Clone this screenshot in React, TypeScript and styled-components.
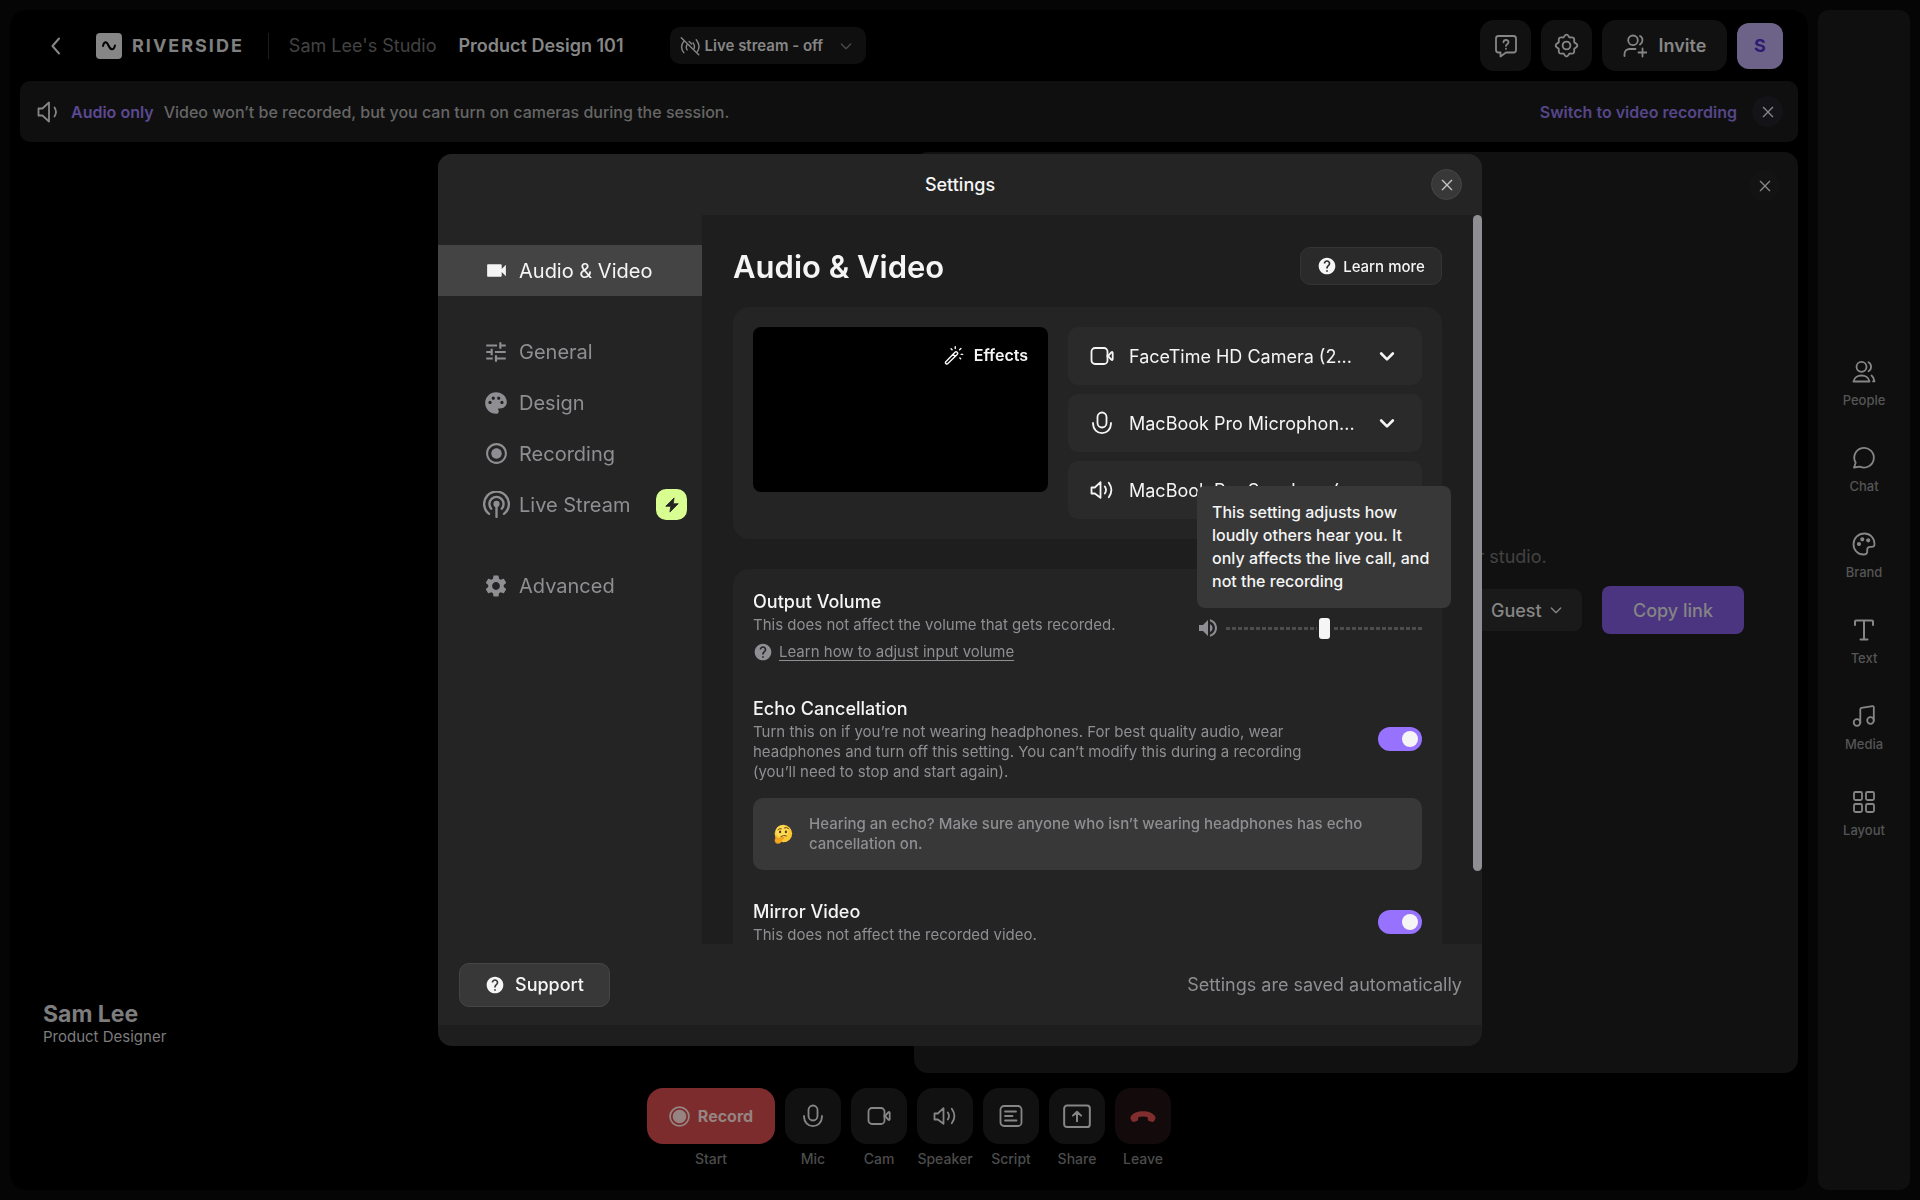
import React, { ReactNode } from "react";
import styled, { createGlobalStyle, css } from "styled-components";
import {
  MdVideocam,
  MdTune,
  MdPalette,
  MdRadioButtonChecked,
  MdSettings,
  MdHelp,
  MdVolumeUp,
} from "react-icons/md";

const GlobalStyle = createGlobalStyle`
  *, *::before, *::after { box-sizing: border-box; }
  body {
    margin: 0;
    background: #050505;
    color: #f5f5f5;
    font-family: Inter, "Liberation Sans", sans-serif;
    font-size: 16px;
  }
  h1, h2, h3, p { margin: 0; font-weight: 400; }
  button, input, select { font: inherit; color: inherit; }
  button { border: 0; padding: 0; background: none; cursor: pointer; }
  svg { display: block; flex: none; }
`;

/* ---------- icons ---------- */

type IconProps = { size?: number; width?: number; children: ReactNode };

const Line = ({ size = 24, width = 2, children }: IconProps) => (
  <svg
    width={size}
    height={size}
    viewBox="0 0 24 24"
    fill="none"
    stroke="currentColor"
    strokeWidth={width}
    strokeLinecap="round"
    strokeLinejoin="round"
    aria-hidden="true"
  >
    {children}
  </svg>
);

const CloseIcon = ({ size = 18 }: { size?: number }) => (
  <Line size={size} width={2}><path d="M5 5l14 14M19 5L5 19" /></Line>
);
const BackIcon = () => <Line><path d="M15 4.500L8.500 12 15 19.500" /></Line>;
const ChevronIcon = ({ size = 18, width = 1.8 }: { size?: number; width?: number }) => (
  <Line size={size} width={width}><path d="M5 9l7 7 7-7" /></Line>
);
const MicIcon = () => (
  <Line width={1.8}>
    <rect x="7.500" y="1.500" width="9" height="15" rx="4.500" />
    <path d="M3 12c0 13.500 18 13.500 18 0" />
  </Line>
);
const CamIcon = () => (
  <Line width={1.8}>
    <rect x="1.500" y="4" width="16" height="16" rx="3.500" />
    <path d="M17.500 12.700L21.300 8.300Q22.700 7.500 22.700 9v6q0 1.500-1.400.7L17.500 11.300z" />
  </Line>
);
const SpeakerIcon = () => (
  <Line width={1.8}>
    <path d="M1.500 9.500h3.300L10.500 4.200V19.800L4.800 15.500H1.500z" />
    <path d="M14.800 8.500q2.400 3.500 0 7M18.800 4.700q5.200 7.300 0 14.600" />
  </Line>
);
const BannerSpeakerIcon = () => (
  <Line width={1.8}>
    <path d="M2.500 8.500h3.900L13 2.500V21.500L6.400 15.500H2.500z" />
    <path d="M18.500 7.500q3 4.500 0 9" />
  </Line>
);
const ScriptIcon = () => (
  <Line width={1.8}>
    <rect x="1.500" y="2" width="21" height="20" rx="3.500" />
    <path d="M6 7.500h11M6 12h7.500M6 16.500h11.500" />
  </Line>
);
const ShareIcon = () => (
  <Line size={28} width={1.7}>
    <rect x="1" y="3" width="22" height="18.500" rx="2.500" />
    <path d="M12 16.500V8.500M8.500 11.700L12 8.300l3.500 3.400" />
  </Line>
);
const LeaveIcon = () => (
  <svg width="26" height="26" viewBox="0 0 24 24" fill="currentColor" aria-hidden="true">
    <path d="M12 7.500C7.200 7.500 2.600 9 .8 12.300c-.7 1.500-.2 3.300 1 4.600.6.700 1.600.6 2.500.4l2-.6c.9-.3 1.300-1 1.300-2v-1.600c2.800-.9 6-.9 8.800 0v1.600c0 1 .4 1.700 1.300 2l2 .6c.9.2 1.900.3 2.500-.4 1.200-1.300 1.700-3.100 1-4.600C21.400 9 16.800 7.500 12 7.500z" />
  </svg>
);
const RecordIcon = () => (
  <Line size={21} width={2}>
    <circle cx="12" cy="12" r="10.800" />
    <circle cx="12" cy="12" r="6.800" fill="currentColor" />
  </Line>
);
const LiveOffIcon = () => (
  <Line size={20} width={1.7}>
    <path d="M1.500 2L22.500 22.500" />
    <path d="M4.500 6.500C1 11 1 15.500 4.500 20M8.500 10.500c-1.300 1.900-1.300 4 0 6.200" />
    <path d="M19.500 4.500c4 5 4 10.500 1.200 14.500M15.700 8.200c1.700 2.100 2 4.500 1.200 6.800M11 6.500l3 3" />
  </Line>
);
const HelpBubbleIcon = () => (
  <Line width={1.8}>
    <path d="M4.500 2h15A2.500 2.500 0 0 1 22 4.500v11.500a2.500 2.500 0 0 1-2.500 2.500H12l-5.500 4v-4h-2A2.500 2.500 0 0 1 2 16V4.500A2.500 2.500 0 0 1 4.500 2z" />
    <path d="M9.500 8.300c.2-3.200 5.200-3 5 .1-.1 1.800-2.500 1.800-2.500 3.500M12 14.600v.2" />
  </Line>
);
const GearIcon = () => (
  <Line size={25} width={1.8}>
    <path d="M12 1.500c1.700 0 1.800 1.800 2.700 2.600.9.700 2.700-.7 4.100.6 1.400 1.400.1 3.100.7 4.200.5 1 2.900 1 2.900 3.100s-2.400 2.100-2.900 3.100c-.6 1.100.7 2.800-.7 4.200-1.400 1.300-3.200-.1-4.100.6-.9.800-1 2.600-2.700 2.600s-1.800-1.800-2.700-2.600c-.9-.7-2.700.7-4.100-.6-1.400-1.400-.1-3.100-.7-4.200-.5-1-2.900-1-2.900-3.100s2.400-2.100 2.900-3.100c.6-1.100-.7-2.800.7-4.200 1.400-1.300 3.200.1 4.100-.6.900-.8 1-2.600 2.700-2.600z" />
    <circle cx="12" cy="12" r="3.700" />
  </Line>
);
const InviteIcon = () => (
  <Line width={1.8}>
    <circle cx="10" cy="6.300" r="4.800" />
    <path d="M1.500 22v-2a5 5 0 0 1 5-5h6M17 2c3.300 1.500 3.300 6.500 0 8.500M19.500 14.500v8M15.500 18.500h8" />
  </Line>
);
const PeopleIcon = () => (
  <Line width={1.8}>
    <circle cx="9.500" cy="6.800" r="5" />
    <path d="M1.500 21.500c1.400-8 14.600-8 16 0zM16.500 2.200c3.400 1.800 3.400 7.200 0 9M19.500 15.500c1.700 1.300 2.700 3 3 5.800h-1.500" />
  </Line>
);
const ChatIcon = () => (
  <Line width={1.8}><path d="M2 21.500l1.700-4.700A9.800 9.800 0 1 1 8 20.600z" /></Line>
);
const BrandIcon = () => (
  <Line width={1.8}>
    <path d="M12.500 1.500C6 1.500 1.500 6.300 1.500 12.200S6 22.500 11.500 22.500c2.800 0 3.700-1 3.700-3v-1.700c0-2 1-3 3-3h1.500c2 0 2.900-1 2.800-3C22.300 5.500 18 1.500 12.500 1.500z" />
    <circle cx="7" cy="12" r="1.200" fill="currentColor" />
    <circle cx="10.300" cy="7.300" r="1.200" fill="currentColor" />
    <circle cx="16.200" cy="8.300" r="1.200" fill="currentColor" />
  </Line>
);
const TextIcon = () => (
  <Line width={2}><path d="M3 7V3.500Q3 2.500 4 2.500H20Q21 2.500 21 3.500V7M12 2.500v19M8.500 21.500h7" /></Line>
);
const MediaIcon = () => (
  <Line width={1.8}>
    <circle cx="5" cy="18.500" r="3.300" />
    <circle cx="18.500" cy="16.500" r="3.300" />
    <path d="M8.300 18.500V5.200Q8.300 4 9.500 3.800L20.500 2.200Q21.800 2 21.800 3.300V16.500" />
  </Line>
);
const LayoutIcon = () => (
  <Line width={1.8}>
    <rect x="2" y="2" width="8" height="8" rx="1.500" />
    <rect x="14" y="2" width="8" height="8" rx="1.500" />
    <rect x="2" y="14" width="8" height="8" rx="1.500" />
    <rect x="14" y="14" width="8" height="8" rx="1.500" />
  </Line>
);
const WandIcon = () => (
  <Line size={20} width={1.7}>
    <path d="M2.200 20l11-11.300a1.800 1.800 0 0 1 2.600 2.600L4.700 22.300a1.700 1.700 0 0 1-2.500-2.300zM10.800 11.200l2.600 2.600" />
    <path d="M13.500 2v2.200M18.700 5.700l1.600-1.600M20.500 11.200h2M8.500 4.500l1.200 1.200M19 15.500l1 1" />
  </Line>
);
const PodcastIcon = () => (
  <Line size={27} width={2.1}>
    <path d="M5.400 20.300a11 11 0 1 1 13.200 0M7.300 15.700a6.300 6.300 0 1 1 9.400 0M12 13v10" />
    <circle cx="12" cy="11.500" r="1.700" fill="currentColor" />
  </Line>
);
const BoltIcon = () => (
  <svg width="20" height="20" viewBox="0 0 24 24" fill="currentColor" stroke="currentColor" strokeLinejoin="round" aria-hidden="true">
    <path d="M14.500 3.500L4.500 13.500H10.500L9.500 20.500L19.500 10.500H13.500z" />
  </svg>
);
const ThinkingFace = () => (
  <svg width="20" height="20" viewBox="0 0 24 24" role="img" aria-label="Thinking face">
    <circle cx="12.500" cy="11.500" r="10.500" fill="#fcc936" />
    <circle cx="11" cy="9" r="7.500" fill="#fddb52" />
    <ellipse cx="8.500" cy="9.500" rx="1.300" ry="1.700" fill="#5b3712" />
    <ellipse cx="15.500" cy="9.500" rx="1.300" ry="1.700" fill="#5b3712" />
    <path d="M6 6.700q2-1.800 4-1M13.500 4.700q2.500-1.300 5 .6M9.500 15q3-2 6.500-.8" fill="none" stroke="#6b4115" strokeWidth="1.200" strokeLinecap="round" />
    <path d="M3 15.500q1.200-.8 1.800 1l.6 1.600 6.300-2.300q1.800-.3 1.500 1.200l-3.400 2q1 3.500-3 4.500-4 .3-4.600-3.500z" fill="#f5a524" stroke="#d98712" strokeWidth=".6" />
  </svg>
);

/* ---------- studio ---------- */

const Shell = styled.div`
  display: grid;
  grid-template-columns: minmax(0, 1fr) 92px;
  gap: 10px;
  height: 100vh;
  padding: 10px;
`;

const Studio = styled.main`
  display: flex;
  flex-direction: column;
  padding: 0 10px;
  border-radius: 16px;
  background: #000;
`;

const Header = styled.header`
  display: flex;
  align-items: center;
  height: 71px;
  padding: 0 15px 0 24px;
  color: #868686;
  font-size: 18px;
`;

const BackButton = styled.button`
  display: flex;
  margin-right: 28px;
`;

const Logo = styled.div`
  display: flex;
  align-items: center;
  gap: 10px;
  padding-right: 24px;
  border-right: 1px solid #1c1c1c;
  margin-right: 20px;
  color: #808080;
  font-weight: 700;
  letter-spacing: 2px;
`;

const StudioName = styled.span`
  margin-right: 22px;
  color: #434343;
`;

const SessionName = styled.h1`
  font-size: 18px;
  font-weight: 600;
`;

const TitleGroup = styled.div`
  display: flex;
  align-items: center;
  margin-right: auto;
`;

const LiveButton = styled.button`
  display: flex;
  align-items: center;
  gap: 5px;
  height: 37px;
  padding: 0 12px 0 10px;
  margin-left: 46px;
  border-radius: 10px;
  background: #0f0f0f;
  font-size: 15px;
  font-weight: 600;
  svg:last-child { margin-left: 10px; color: #4a4a4a; }
`;

const HeaderActions = styled.div`
  display: flex;
  align-items: center;
  gap: 10px;
`;

const HeaderButton = styled.button<{ $wide?: boolean }>`
  display: flex;
  align-items: center;
  justify-content: center;
  gap: 12px;
  height: 51px;
  width: ${(p) => (p.$wide ? "125px" : "51px")};
  border-radius: 14px;
  background: #111;
  font-weight: 600;
`;

const Avatar = styled.button`
  width: 46px;
  height: 46px;
  border-radius: 12px;
  background: #6d6388;
  color: #2e1a72;
  font-weight: 700;
`;

const Banner = styled.section`
  display: flex;
  align-items: center;
  height: 61px;
  padding: 0 15px 0 16px;
  border-radius: 10px;
  background: #0f0f0f;
  color: #666;
  font-size: 16px;
  font-weight: 500;
  svg { color: #868686; }
`;

const BannerTitle = styled.strong`
  margin: 0 10px 0 11px;
  color: #5b4991;
  font-weight: 600;
`;

const BannerLink = styled.a`
  margin-left: auto;
  margin-right: 15px;
  color: #56468a;
  font-weight: 600;
  text-decoration: none;
`;

const RoundButton = styled.button<{ $bg?: string }>`
  display: flex;
  align-items: center;
  justify-content: center;
  width: 31px;
  height: 31px;
  border-radius: 50%;
  background: ${(p) => p.$bg ?? "transparent"};
  color: #868686;
`;

const Stage = styled.div`
  display: grid;
  grid-template-columns: 1fr 1fr;
  gap: 10px;
  flex: 1;
  min-height: 0;
  margin-top: 10px;
`;

const VideoTile = styled.section`
  display: flex;
  flex-direction: column;
  justify-content: flex-end;
  padding: 0 23px 26px;
  border-radius: 14px;
  background: #000;
  color: #7d7d7d;
`;

const TileName = styled.h2`
  font-size: 23px;
  font-weight: 700;
  line-height: 26px;
`;

const TileRole = styled.p`
  font-size: 15px;
  line-height: 20px;
`;

const InviteTile = styled.section`
  display: flex;
  flex-direction: column;
  padding: 18px;
  border-radius: 14px;
  background: #111;
`;

const TileTop = styled.div`
  display: flex;
  justify-content: flex-end;
`;

const InviteBody = styled.div`
  display: flex;
  flex-direction: column;
  justify-content: center;
  gap: 18px;
  flex: 1;
  padding: 0 36px 76px;
`;

const InviteText = styled.p`
  text-align: center;
  color: #434343;
  font-size: 18px;
  line-height: 22px;
`;

const InviteRow = styled.div`
  display: flex;
  align-items: center;
  gap: 20px;
`;

const LinkBox = styled.div`
  display: flex;
  align-items: center;
  flex: 1;
  height: 42px;
  padding: 0 18px;
  border-radius: 8px;
  background: #1a1a1a;
  color: #868686;
  font-size: 18px;
`;

const LinkInput = styled.input`
  flex: 1;
  min-width: 0;
  border: 0;
  background: none;
`;

const BareSelect = styled.select`
  appearance: none;
  border: 0;
  padding: 0;
  background: none;
  outline: 0;
`;

const RoleSelect = styled(BareSelect)`
  width: 57px;
  font-weight: 500;
`;

const CopyButton = styled.button`
  width: 142px;
  height: 48px;
  border-radius: 8px;
  background: #4b3580;
  color: #858585;
  font-size: 18px;
  font-weight: 500;
`;

const Controls = styled.nav`
  display: flex;
  justify-content: center;
  gap: 10px;
  height: 117px;
  padding-top: 15px;
`;

const Control = styled.div`
  display: flex;
  flex-direction: column;
  align-items: center;
  gap: 5px;
  min-width: 56px;
  width: min-content;
  color: #868686;
`;

const ControlButton = styled.button<{ $kind?: "record" | "leave" }>`
  display: flex;
  align-items: center;
  justify-content: center;
  gap: 8px;
  width: 56px;
  height: 56px;
  border-radius: 16px;
  background: #111;
  ${(p) =>
    p.$kind === "record" &&
    css`
      width: 128px;
      background: #7c2c2c;
      color: #958482;
      font-size: 16px;
      font-weight: 700;
    `}
  ${(p) =>
    p.$kind === "leave" &&
    css`
      background: #130b0b;
      color: #7f2d2d;
    `}
`;

const ControlLabel = styled.span`
  color: #4c4c4c;
  font-size: 14px;
  font-weight: 500;
  line-height: 20px;
`;

const SideRail = styled.aside`
  display: flex;
  flex-direction: column;
  align-items: center;
  justify-content: center;
  gap: 38px;
  padding-bottom: 2px;
  border-radius: 10px;
  background: #0f0f0f;
`;

const RailButton = styled.button`
  display: flex;
  flex-direction: column;
  align-items: center;
  gap: 8px;
  color: #868686;
`;

const RailLabel = styled.span`
  color: #555;
  font-size: 13px;
  font-weight: 500;
  line-height: 16px;
`;

/* ---------- settings dialog ---------- */

const Overlay = styled.div`
  position: fixed;
  inset: 0;
  display: flex;
  justify-content: center;
  padding: 154px 24px;
`;

const Dialog = styled.div`
  display: flex;
  flex-direction: column;
  width: 100%;
  max-width: 1044px;
  overflow: hidden;
  padding-bottom: 21px;
  border-radius: 14px;
  background: #1e1e1e;
`;

const DialogHeader = styled.div`
  display: grid;
  grid-template-columns: 1fr auto 1fr;
  align-items: center;
  height: 61px;
  padding: 0 20px;
  background: #242424;
  > button { grid-column: 3; justify-self: end; border: 1px solid #454545; color: #c4c4c4; }
`;

const DialogTitle = styled.h2`
  grid-column: 2;
  font-size: 18px;
  font-weight: 500;
`;

const DialogBody = styled.div`
  display: flex;
  flex: 1;
  min-height: 0;
`;

const Tabs = styled.nav`
  display: flex;
  flex-direction: column;
  gap: 30px;
  width: 264px;
  padding-top: 30px;
  background: #242424;
`;

const Tab = styled.button<{ $active?: boolean }>`
  display: flex;
  align-items: center;
  width: 100%;
  height: 51px;
  padding: 0 15px 0 44px;
  background: ${(p) => (p.$active ? "#444" : "none")};
  color: ${(p) => (p.$active ? "#f5f5f5" : "#8f8f93")};
  font-size: 20px;
`;

const TabIcon = styled.span`
  display: flex;
  justify-content: center;
  width: 28px;
  margin-right: 9px;
`;

const Badge = styled.span`
  display: flex;
  align-items: center;
  justify-content: center;
  width: 31px;
  height: 31px;
  margin-left: auto;
  border-radius: 10px;
  background: #d8fe91;
  color: #242424;
`;

const Panel = styled.div`
  flex: 1;
  min-width: 0;
  overflow: hidden;
  padding: 31px;
`;

const ScrollRail = styled.div`
  width: 9px;
`;

const ScrollThumb = styled.div`
  height: 90%;
  border-radius: 5px;
  background: #8f8f93;
`;

const PanelHead = styled.div`
  display: flex;
  align-items: center;
  justify-content: space-between;
  height: 40px;
`;

const PanelTitle = styled.h1`
  font-size: 31px;
  font-weight: 600;
`;

const HelpButton = styled.button<{ $large?: boolean }>`
  display: flex;
  align-items: center;
  justify-content: center;
  gap: ${(p) => (p.$large ? "10px" : "6px")};
  width: ${(p) => (p.$large ? "151px" : "142px")};
  height: ${(p) => (p.$large ? "44px" : "38px")};
  border: 1px solid ${(p) => (p.$large ? "#454545" : "#343434")};
  border-radius: 10px;
  background: ${(p) => (p.$large ? "#383838" : "#2a2a2a")};
  font-size: ${(p) => (p.$large ? "18px" : "15px")};
  font-weight: 500;
`;

const DevicesCard = styled.section`
  display: grid;
  grid-template-columns: 295px minmax(0, 1fr);
  align-items: start;
  gap: 20px;
  margin-top: 21px;
  padding: 20px;
  border-radius: 16px;
  background: #242424;
`;

const Preview = styled.div`
  display: flex;
  align-items: flex-start;
  justify-content: flex-end;
  height: 165px;
  padding: 12px 10px;
  border-radius: 8px;
  background: #000;
`;

const EffectsButton = styled.button`
  display: flex;
  align-items: center;
  gap: 10px;
  height: 31px;
  padding: 0 10px;
  border-radius: 8px;
  font-size: 16px;
  font-weight: 600;
`;

const DeviceList = styled.div`
  display: flex;
  flex-direction: column;
  gap: 9px;
`;

const Device = styled.label`
  display: flex;
  align-items: center;
  gap: 15px;
  height: 58px;
  padding: 0 25px 0 22px;
  border-radius: 10px;
  background: #2a2a2a;
  font-size: 18px;
  svg { pointer-events: none; }
`;

const DeviceSelect = styled(BareSelect)`
  flex: 1;
  min-width: 0;
`;

const OptionsCard = styled.section`
  display: flex;
  flex-direction: column;
  gap: 29px;
  margin-top: 30px;
  padding: 20px;
  border-radius: 16px;
  background: #242424;
`;

const Option = styled.div`
  display: flex;
  align-items: center;
  justify-content: space-between;
`;

const OptionText = styled.div`
  max-width: 580px;
`;

const OptionTitle = styled.h3`
  font-size: 18px;
  font-weight: 500;
  line-height: 26px;
`;

const OptionNote = styled.p`
  color: #8f8f93;
  font-size: 15px;
  line-height: 20px;
`;

const HelpLink = styled.a`
  display: flex;
  align-items: center;
  gap: 6px;
  margin: 7px 0 5px;
  color: #8f8f93;
  font-size: 15px;
  line-height: 20px;
  text-decoration: none;
  span { text-decoration: underline; text-underline-offset: 3px; }
`;

const Volume = styled.div`
  position: relative;
  display: flex;
  align-items: center;
  gap: 6px;
  width: 226px;
  color: #8f8f93;
`;

const VolumeSlider = styled.input`
  appearance: none;
  flex: 1;
  min-width: 0;
  height: 22px;
  margin: 0;
  background: none;
  &::-webkit-slider-runnable-track {
    height: 3px;
    background: repeating-linear-gradient(90deg, #4c4c4c 0 4px, transparent 4px 6px);
  }
  &::-webkit-slider-thumb {
    appearance: none;
    width: 11px;
    height: 21px;
    margin-top: -9px;
    border-radius: 3px;
    background: #f5f5f5;
    box-shadow: 0 0 0 2px #242424;
  }
`;

const Tooltip = styled.div`
  position: absolute;
  right: -29px;
  bottom: 32px;
  width: 254px;
  padding: 15px 20px 15px 15px;
  border-radius: 8px;
  background: #383838;
  color: #f5f5f5;
  font-size: 16px;
  font-weight: 500;
  line-height: 23px;
`;

const Toggle = styled.input`
  appearance: none;
  width: 44px;
  height: 24px;
  margin: 0;
  padding: 4px 4px 4px 24px;
  border-radius: 12px;
  background: #9672ff;
  &::after {
    content: "";
    display: block;
    width: 16px;
    height: 16px;
    border-radius: 50%;
    background: #f5f5f5;
  }
`;

const EchoGroup = styled.div`
  display: flex;
  flex-direction: column;
  gap: 16px;
`;

const Hint = styled.p`
  display: flex;
  align-items: center;
  gap: 16px;
  padding: 16px 20px;
  border-radius: 10px;
  background: #383838;
  color: #8f8f93;
  font-size: 15px;
  font-weight: 500;
  line-height: 20px;
`;

const DialogFooter = styled.div`
  display: flex;
  align-items: center;
  justify-content: space-between;
  height: 81px;
  padding: 0 20px 0 21px;
  background: #242424;
  color: #8f8f93;
  font-size: 18px;
  button { color: #f5f5f5; }
`;

/* ---------- data ---------- */

const controls = [
  { label: "Mic", icon: <MicIcon /> },
  { label: "Cam", icon: <CamIcon /> },
  { label: "Speaker", icon: <SpeakerIcon /> },
  { label: "Script", icon: <ScriptIcon /> },
  { label: "Share", icon: <ShareIcon /> },
];

const railItems = [
  { label: "People", icon: <PeopleIcon /> },
  { label: "Chat", icon: <ChatIcon /> },
  { label: "Brand", icon: <BrandIcon /> },
  { label: "Text", icon: <TextIcon /> },
  { label: "Media", icon: <MediaIcon /> },
  { label: "Layout", icon: <LayoutIcon /> },
];

const tabGroups = [
  [{ label: "Audio & Video", icon: <MdVideocam size={25} />, active: true }],
  [
    { label: "General", icon: <MdTune size={26} /> },
    { label: "Design", icon: <MdPalette size={26} /> },
    { label: "Recording", icon: <MdRadioButtonChecked size={25} /> },
    { label: "Live Stream", icon: <PodcastIcon />, badge: true },
  ],
  [{ label: "Advanced", icon: <MdSettings size={26} /> }],
] as { label: string; icon: ReactNode; active?: boolean; badge?: boolean }[][];

const devices = [
  { name: "Camera", value: "FaceTime HD Camera (2...", icon: <CamIcon /> },
  { name: "Microphone", value: "MacBook Pro Microphon...", icon: <MicIcon /> },
  { name: "Speaker", value: "MacBook Pro Speakers (...", icon: <SpeakerIcon /> },
];

const SettingsDialog = () => (
  <Overlay>
    <Dialog role="dialog" aria-modal="true" aria-labelledby="settings-title">
      <DialogHeader>
        <DialogTitle id="settings-title">Settings</DialogTitle>
        <RoundButton $bg="#383838" aria-label="Close settings"><CloseIcon size={16} /></RoundButton>
      </DialogHeader>
      <DialogBody>
        <Tabs>
          {tabGroups.map((group, i) => (
            <div key={i}>
              {group.map((tab) => (
                <Tab key={tab.label} $active={tab.active}>
                  <TabIcon>{tab.icon}</TabIcon>
                  {tab.label}
                  {tab.badge && <Badge><BoltIcon /></Badge>}
                </Tab>
              ))}
            </div>
          ))}
        </Tabs>
        <Panel>
          <PanelHead>
            <PanelTitle>Audio &amp; Video</PanelTitle>
            <HelpButton><MdHelp size={20} />Learn more</HelpButton>
          </PanelHead>
          <DevicesCard>
            <Preview>
              <EffectsButton><WandIcon />Effects</EffectsButton>
            </Preview>
            <DeviceList>
              {devices.map((d) => (
                <Device key={d.name}>
                  {d.icon}
                  <DeviceSelect aria-label={d.name}>
                    <option>{d.value}</option>
                  </DeviceSelect>
                  <ChevronIcon size={20} width={3.2} />
                </Device>
              ))}
            </DeviceList>
          </DevicesCard>
          <OptionsCard>
            <Option>
              <OptionText>
                <OptionTitle>Output Volume</OptionTitle>
                <OptionNote>This does not affect the volume that gets recorded.</OptionNote>
                <HelpLink href="#volume"><MdHelp size={20} /><span>Learn how to adjust input volume</span></HelpLink>
              </OptionText>
              <Volume>
                <MdVolumeUp size={24} />
                <VolumeSlider type="range" aria-label="Output volume" defaultValue={50} />
                <Tooltip role="tooltip">
                  This setting adjusts how loudly others hear you. It only affects the live call, and not the recording
                </Tooltip>
              </Volume>
            </Option>
            <EchoGroup>
              <Option>
                <OptionText>
                  <OptionTitle>Echo Cancellation</OptionTitle>
                  <OptionNote>
                    Turn this on if you’re not wearing headphones. For best quality audio, wear headphones and turn off
                    this setting. You can’t modify this during a recording (you’ll need to stop and start again).
                  </OptionNote>
                </OptionText>
                <Toggle type="checkbox" defaultChecked aria-label="Echo cancellation" />
              </Option>
              <Hint>
                <ThinkingFace />
                <span>Hearing an echo? Make sure anyone who isn’t wearing headphones has echo cancellation on.</span>
              </Hint>
            </EchoGroup>
            <Option>
              <OptionText>
                <OptionTitle>Mirror Video</OptionTitle>
                <OptionNote>This does not affect the recorded video.</OptionNote>
              </OptionText>
              <Toggle type="checkbox" defaultChecked aria-label="Mirror video" />
            </Option>
          </OptionsCard>
        </Panel>
        <ScrollRail><ScrollThumb /></ScrollRail>
      </DialogBody>
      <DialogFooter>
        <HelpButton $large><MdHelp size={20} />Support</HelpButton>
        <span>Settings are saved automatically</span>
      </DialogFooter>
    </Dialog>
  </Overlay>
);

export default function App() {
  return (
    <>
      <GlobalStyle />
      <Shell>
        <Studio>
          <Header>
            <BackButton aria-label="Back"><BackIcon /></BackButton>
            <Logo>
              <svg width="26" height="26" viewBox="0 0 26 26" aria-hidden="true">
                <rect width="26" height="26" rx="4" fill="#868686" />
                <path d="M7 13C8 8.500 10.500 7.800 12.500 12.500S17.500 18 19 12.500" fill="none" stroke="#000" strokeWidth="2" strokeLinecap="round" />
              </svg>
              RIVERSIDE
            </Logo>
            <TitleGroup>
              <StudioName>Sam Lee's Studio</StudioName>
              <SessionName>Product Design 101</SessionName>
              <LiveButton><LiveOffIcon />Live stream - off<ChevronIcon size={16} width={2} /></LiveButton>
            </TitleGroup>
            <HeaderActions>
              <HeaderButton aria-label="Help"><HelpBubbleIcon /></HeaderButton>
              <HeaderButton aria-label="Settings"><GearIcon /></HeaderButton>
              <HeaderButton $wide><InviteIcon />Invite</HeaderButton>
              <Avatar>S</Avatar>
            </HeaderActions>
          </Header>
          <Banner>
            <BannerSpeakerIcon />
            <BannerTitle>Audio only</BannerTitle>
            <span>Video won’t be recorded, but you can turn on cameras during the session.</span>
            <BannerLink href="#video">Switch to video recording</BannerLink>
            <RoundButton $bg="#131318" aria-label="Dismiss"><CloseIcon size={16} /></RoundButton>
          </Banner>
          <Stage>
            <VideoTile>
              <TileName>Sam Lee</TileName>
              <TileRole>Product Designer</TileRole>
            </VideoTile>
            <InviteTile>
              <TileTop>
                <RoundButton $bg="#131313" aria-label="Close invite"><CloseIcon size={16} /></RoundButton>
              </TileTop>
              <InviteBody>
                <InviteText>Share this link to invite people to your studio.</InviteText>
                <InviteRow>
                  <LinkBox>
                    <LinkInput aria-label="Invite link" readOnly />
                    <RoleSelect aria-label="Role"><option>Guest</option></RoleSelect>
                    <ChevronIcon size={16} width={2} />
                  </LinkBox>
                  <CopyButton>Copy link</CopyButton>
                </InviteRow>
              </InviteBody>
            </InviteTile>
          </Stage>
          <Controls>
            <Control>
              <ControlButton $kind="record"><RecordIcon />Record</ControlButton>
              <ControlLabel>Start</ControlLabel>
            </Control>
            {controls.map((c) => (
              <Control key={c.label}>
                <ControlButton aria-label={c.label}>{c.icon}</ControlButton>
                <ControlLabel>{c.label}</ControlLabel>
              </Control>
            ))}
            <Control>
              <ControlButton $kind="leave" aria-label="Leave"><LeaveIcon /></ControlButton>
              <ControlLabel>Leave</ControlLabel>
            </Control>
          </Controls>
        </Studio>
        <SideRail>
          {railItems.map((r) => (
            <RailButton key={r.label}>
              {r.icon}
              <RailLabel>{r.label}</RailLabel>
            </RailButton>
          ))}
        </SideRail>
      </Shell>
      <SettingsDialog />
    </>
  );
}
